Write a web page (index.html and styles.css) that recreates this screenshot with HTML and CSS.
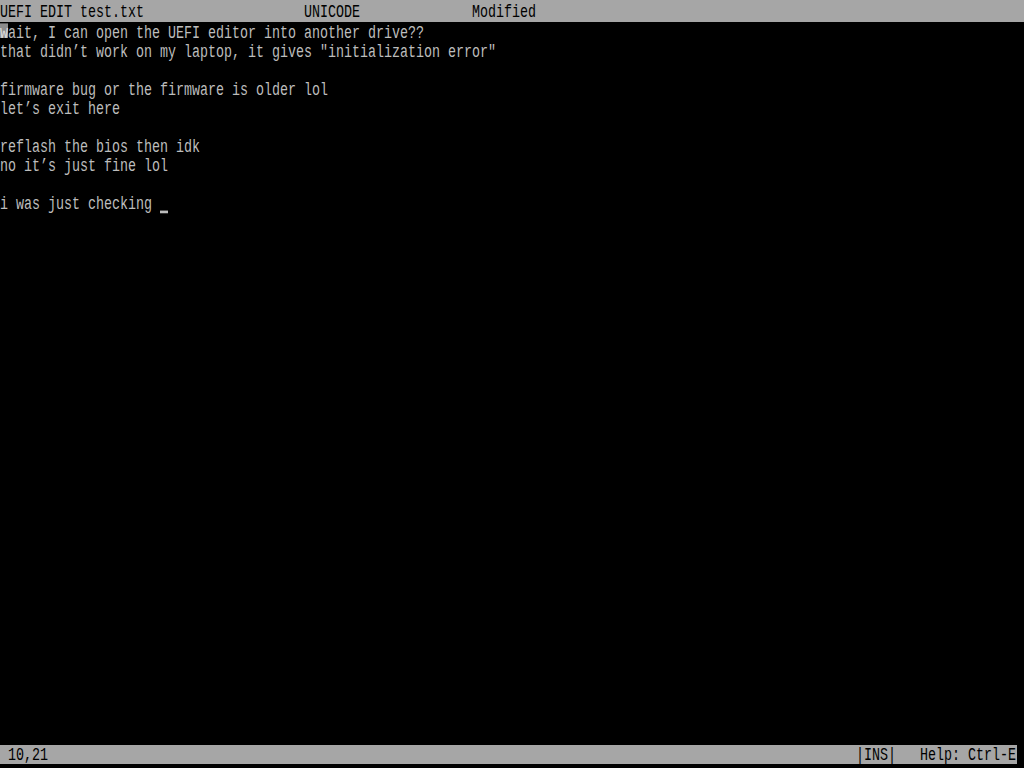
FILE: index.html
```html
<!DOCTYPE html>
<html lang="en">
  <head>
    <meta charset="UTF-8" />
    <title>UEFI EDIT</title>
    <link rel="stylesheet" href="styles.css">
  </head>
  <body>
    <div class="screen">
      <div class="title-bar">
        <span class="file">UEFI EDIT test.txt</span>
        <span class="enc">UNICODE</span>
        <span class="state">Modified</span>
      </div>
      <div class="text-area">
        <div class="line"><span class="mouse">w</span>ait, I can open the UEFI editor into another drive??</div>
        <div class="line">that didn’t work on my laptop, it gives "initialization error"</div>
        <div class="line"></div>
        <div class="line">firmware bug or the firmware is older lol</div>
        <div class="line">let’s exit here</div>
        <div class="line"></div>
        <div class="line">reflash the bios then idk</div>
        <div class="line">no it’s just fine lol</div>
        <div class="line"></div>
        <div class="line">i was just checking <span class="cursor"></span></div>
      </div>
      <div class="status-bar">
        <span class="pos">10,21</span>
        <span class="mode">|INS|</span>
        <span class="help">Help: Ctrl-E</span>
      </div>
    </div>
  </body>
</html>
```

FILE: styles.css
```css
html,
body {
  margin: 0;
  padding: 0;
  background: #000;
}
.screen {
  display: flex;
  flex-direction: column;
  width: 1024px;
  height: 768px;
  font-family: 'Liberation Mono', 'DejaVu Sans Mono', monospace;
  font-size: 13.34px;
  color: #bdbdbd;
  overflow: hidden;
}
.title-bar span,
.status-bar span,
.line {
  white-space: pre;
}
/* top bar */
.title-bar {
  display: flex;
  height: 22px;
  line-height: 22px;
  background-color: #a6a6a6;
  color: #000;
}
.title-bar span {
  transform: translateY(2px) scaleY(1.35);
}
.title-bar .file {
  width: 304px;
}
.title-bar .enc {
  width: 168px;
}
/* text */
.text-area {
  flex: 1;
}
.line {
  height: 19px;
  line-height: 19px;
  transform: translateY(2px) scaleY(1.35);
}
.mouse {
  background: linear-gradient(
    to bottom,
    transparent 0,
    #8c8c8c 0,
    #8c8c8c 11px,
    transparent 11px
  );
  color: #e0e0e0;
}
.cursor {
  display: inline-block;
  width: 8px;
  height: 2px;
  vertical-align: -3px;
  background-color: #bdbdbd;
}
/* bottom bar */
.status-bar {
  display: flex;
  width: 1017px;
  height: 19px;
  line-height: 19px;
  margin-bottom: 4px;
  background-color: #a6a6a6;
  color: #000;
}
.status-bar span {
  transform: translateY(1px) scaleY(1.35);
}
.status-bar .pos {
  padding-left: 8px;
  flex: 1;
}
.status-bar .mode {
  width: 64px;
}
.status-bar .help {
  width: 97px;
}
```
